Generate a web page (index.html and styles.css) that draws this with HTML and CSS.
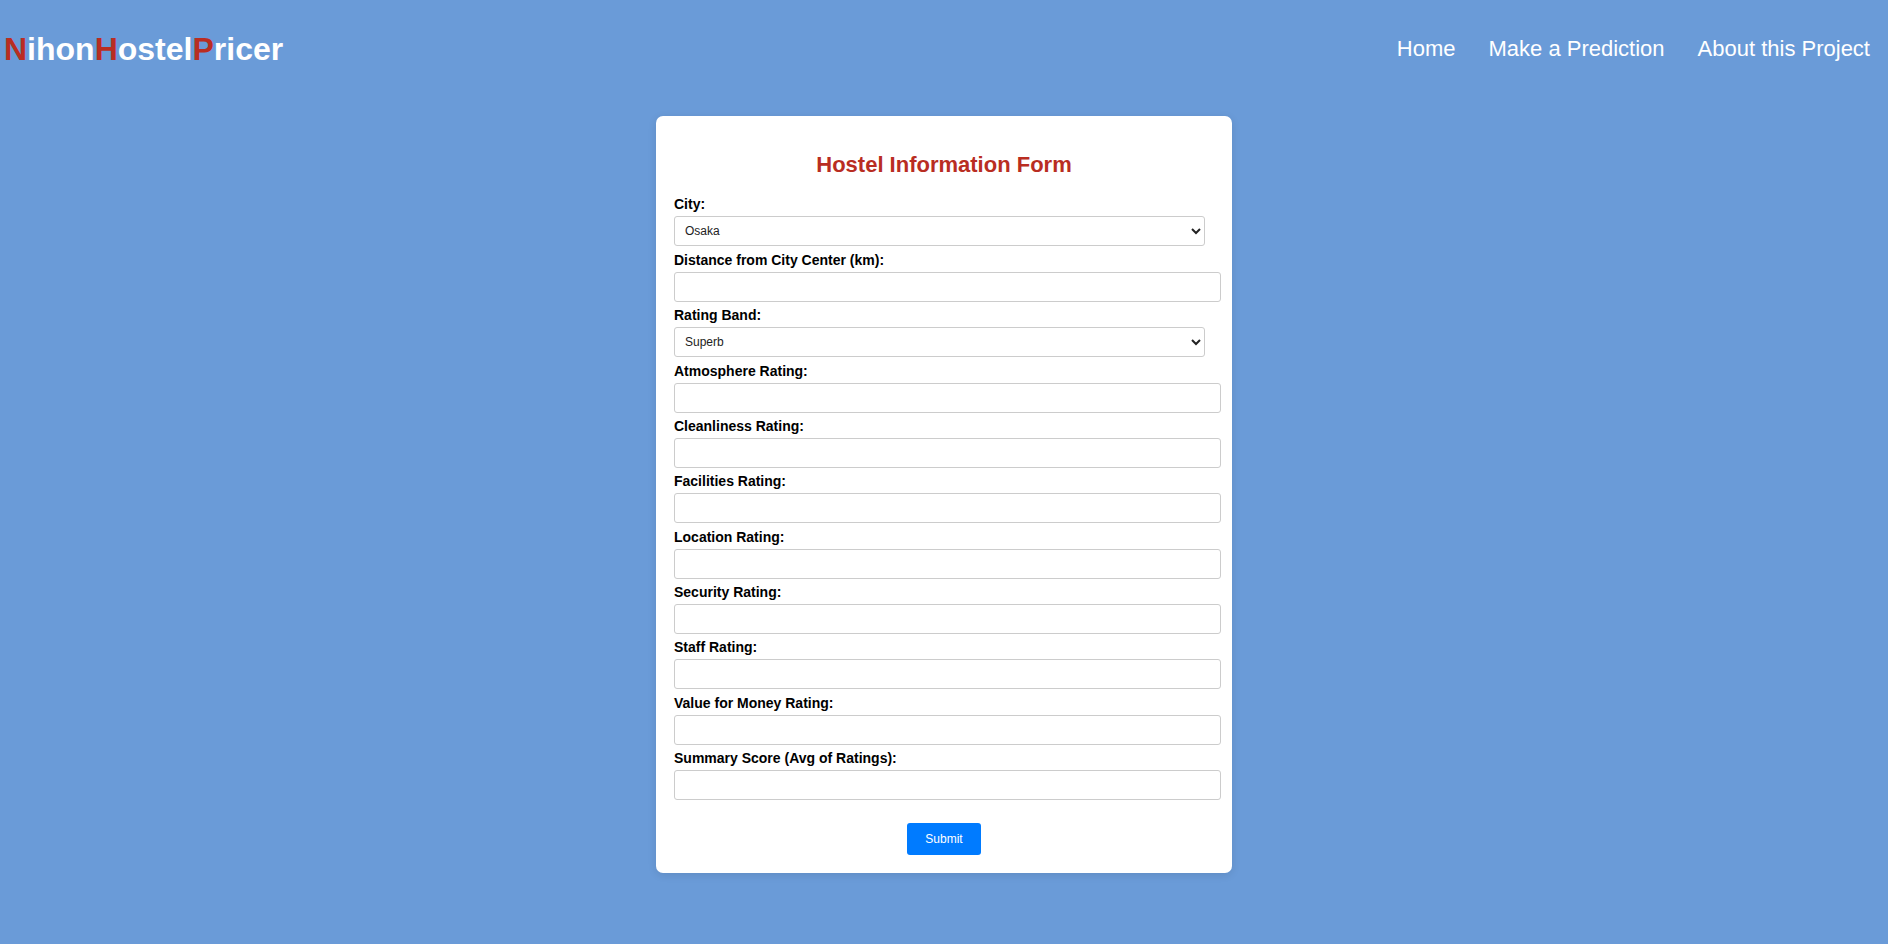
FILE: index.html
```html
<!DOCTYPE html>
<html lang="en">
<head>
<meta charset="utf-8">
<title>NihonHostelPricer</title>
<link rel="stylesheet" href="styles.css">
</head>
<body>
<header class="site-header">
  <h1 class="brand"><span class="accent">N</span>ihon<span class="accent">H</span>ostel<span class="accent">P</span>ricer</h1>
  <nav class="site-nav">
    <a href="#">Home</a>
    <a href="#">Make a Prediction</a>
    <a href="#">About this Project</a>
  </nav>
</header>
<main>
  <form class="card">
    <h2 class="card-title">Hostel Information Form</h2>
    <div class="fields">
      <div class="field"><label for="city">City:</label><select id="city"><option>Osaka</option><option>Tokyo</option><option>Kyoto</option><option>Hiroshima</option></select></div>
      <div class="field"><label for="distance">Distance from City Center (km):</label><input type="text" id="distance"></div>
      <div class="field"><label for="band">Rating Band:</label><select id="band"><option>Superb</option><option>Fabulous</option><option>Very Good</option></select></div>
      <div class="field"><label for="atmosphere">Atmosphere Rating:</label><input type="text" id="atmosphere"></div>
      <div class="field"><label for="cleanliness">Cleanliness Rating:</label><input type="text" id="cleanliness"></div>
      <div class="field"><label for="facilities">Facilities Rating:</label><input type="text" id="facilities"></div>
      <div class="field"><label for="location">Location Rating:</label><input type="text" id="location"></div>
      <div class="field"><label for="security">Security Rating:</label><input type="text" id="security"></div>
      <div class="field"><label for="staff">Staff Rating:</label><input type="text" id="staff"></div>
      <div class="field"><label for="value">Value for Money Rating:</label><input type="text" id="value"></div>
      <div class="field"><label for="summary">Summary Score (Avg of Ratings):</label><input type="text" id="summary"></div>
    </div>
    <button type="submit" class="submit">Submit</button>
  </form>
</main>
</body>
</html>
```
FILE: styles.css
```css
* {
  box-sizing: border-box;
}

body {
  margin: 0;
  background: #6a9bd8;
  font-family: "Liberation Sans", Arial, sans-serif;
}

.site-header {
  display: flex;
  justify-content: space-between;
  align-items: center;
  padding: 31px 18px 29px 4px;
}

.brand {
  margin: 0;
  color: #fff;
  font-size: 32px;
  line-height: 36px;
}

.accent {
  color: #b92d22;
}

.site-nav {
  display: flex;
  gap: 33px;
}

.site-nav a {
  color: #fff;
  font-size: 22px;
  line-height: 36px;
  text-decoration: none;
}

.card {
  display: flex;
  flex-direction: column;
  max-width: 576px;
  margin: 20px auto;
  padding: 37px 18px 18px;
  background: #fff;
  border-radius: 7px;
  box-shadow: 0 2px 8px rgba(0, 0, 0, 0.1);
}

.card-title {
  margin: 0 0 18px;
  color: #b92d22;
  font-size: 22px;
  line-height: 24px;
  text-align: center;
}

.fields {
  width: calc(100% + 7px);
}

.field {
  padding-bottom: 4px;
}

.field:first-child,
.field:nth-child(3n) {
  padding-bottom: 5px;
}

.field label {
  display: block;
  padding-bottom: 3px;
  font-size: 14px;
  font-weight: bold;
  line-height: 18px;
  color: #000;
}

.field input,
.field select {
  display: block;
  width: 100%;
  height: 30px;
  padding: 7px 9px;
  border: 1px solid #ccc;
  border-radius: 3px;
  background-color: #fff;
  color: #222;
  font-family: inherit;
  font-size: 12px;
}

.field select {
  width: calc(100% - 16px);
  padding: 0 6px;
}

.submit {
  align-self: center;
  margin-top: 19px;
  padding: 9px 18px;
  border: 0;
  border-radius: 3px;
  background: #007bff;
  color: #fff;
  font-family: inherit;
  font-size: 12px;
  line-height: 14px;
}
```
